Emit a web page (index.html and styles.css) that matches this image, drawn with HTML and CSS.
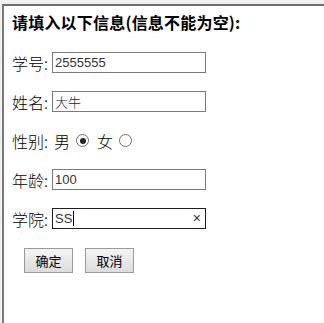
FILE: index.html
```html
<!DOCTYPE html>
<html>
<head>
<meta charset="utf-8">
<link rel="stylesheet" href="styles.css">
</head>
<body>
<div class="frame">
  <div class="inner">
    <form class="form">
      <h3 class="title">请填入以下信息(信息不能为空):</h3>
      <div class="row"><span class="label">学号:</span><span class="field"><span class="val num">2555555</span></span></div>
      <div class="row"><span class="label">姓名:</span><span class="field"><span class="val cjk">大牛</span></span></div>
      <div class="row"><span class="label">性别:</span><span class="opt">男</span><span class="radio checked"></span><span class="opt">女</span><span class="radio"></span></div>
      <div class="row"><span class="label">年龄:</span><span class="field"><span class="val num">100</span></span></div>
      <div class="row"><span class="label">学院:</span><span class="field focus"><span class="val num">SS</span><span class="caret"></span><span class="clear">×</span></span></div>
      <div class="buttons"><button type="button" class="btn">确定</button><button type="button" class="btn">取消</button></div>
    </form>
  </div>
</div>
</body>
</html>
```
FILE: styles.css
```css
html, body {
  margin: 0;
  padding: 0;
  background: #fff;
}
.frame {
  width: 324px;
  height: 323px;
  box-sizing: border-box;
  border-top: 4px solid #f0f0f0;
  border-left: 2px solid #f0f0f0;
}
.inner {
  height: 100%;
  box-sizing: border-box;
  border-top: 2px solid #6e6e6e;
  border-left: 2px solid #7a7a7a;
  padding: 6px 0 0 8px;
}
.form {
  display: flex;
  flex-direction: column;
  gap: 16px;
}
.title {
  margin: 0 0 3px 0;
  font-family: "Noto Sans CJK SC", sans-serif;
  font-size: 16px;
  font-weight: bold;
  line-height: 20px;
  color: #000;
  letter-spacing: 0.2px;
}
.row {
  display: flex;
  align-items: center;
  height: 23px;
  font-family: "Noto Sans CJK SC", sans-serif;
  font-size: 16px;
  font-weight: 300;
  color: #000;
}
.label {
  width: 40px;
}
.field {
  position: relative;
  display: flex;
  align-items: center;
  width: 154px;
  height: 21px;
  box-sizing: border-box;
  border: 1px solid #7a7a7a;
  padding-left: 2px;
  background: #fff;
}
.field.focus {
  border-color: #1e1e1e;
}
.val {
  font-size: 13px;
  color: #333;
}
.val.num {
  font-family: "Liberation Sans", Arial, sans-serif;
  font-weight: normal;
}
.val.cjk {
  font-family: "Noto Sans CJK SC", sans-serif;
  font-weight: 300;
  color: #222;
}
.caret {
  width: 1px;
  height: 15px;
  background: #000;
  margin-left: 1px;
}
.clear {
  position: absolute;
  right: 4px;
  top: 1px;
  font-family: "Liberation Sans", Arial, sans-serif;
  font-size: 14px;
  line-height: 17px;
  color: #333;
}
.opt {
  margin-left: 2px;
}
.radio {
  width: 13px;
  height: 13px;
  box-sizing: border-box;
  border: 1px solid #6f6f6f;
  border-radius: 50%;
  background: #fff;
  margin: 0 6px 0 6px;
  position: relative;
}
.radio.checked::after {
  content: "";
  position: absolute;
  left: 2.5px;
  top: 2.5px;
  width: 6px;
  height: 6px;
  border-radius: 50%;
  background: #222;
}
.buttons {
  display: flex;
  gap: 12px;
  padding-left: 12px;
  margin-top: 2px;
}
.btn {
  width: 49px;
  height: 25px;
  box-sizing: border-box;
  border: 1px solid #9a9a9a;
  border-radius: 0;
  background: linear-gradient(#f4f4f4, #dcdcdc);
  font-family: "Noto Sans CJK SC", sans-serif;
  font-size: 13px;
  color: #000;
  padding: 0;
  margin: 0;
}
```
